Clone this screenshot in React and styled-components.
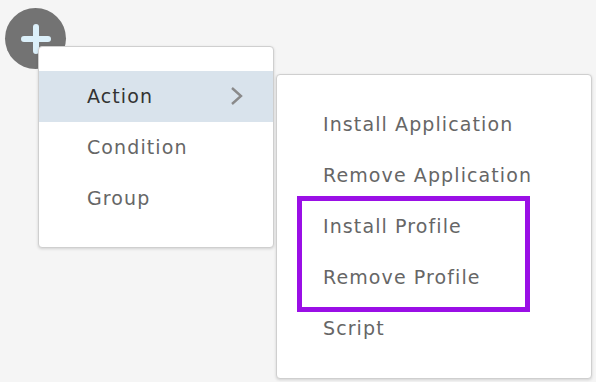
import React from 'react';
import styled, { createGlobalStyle } from 'styled-components';

const GlobalStyle = createGlobalStyle`
    html, body {
        margin: 0;
        background: #f5f5f5;
        font-family: "DejaVu Sans", "Open Sans", sans-serif;
    }
`;

const actions = [
    'Install Application',
    'Remove Application',
    'Install Profile',
    'Remove Profile',
    'Script',
];

const App = () => {
    return (
        <Page>
            <GlobalStyle />
            <AddButton>
                <svg width="32" height="32" viewBox="0 0 32 32">
                    <path d="M16 4v24M4 16h24" stroke="#dcf0fa" strokeWidth="6" strokeLinecap="round" />
                </svg>
                <Dropdown>
                    <Menu $width={236}>
                        <Item $active>
                            Action
                            <svg width="14" height="20" viewBox="0 0 14 20">
                                <path d="M2 2l9 8-9 8" fill="none" stroke="#8a8a8a" strokeWidth="2.4" />
                            </svg>
                        </Item>
                        <Item>Condition</Item>
                        <Item>Group</Item>
                    </Menu>
                    <SubMenu $width={316}>
                        {actions.map((a) => (
                            <Item key={a} $sub>{a}</Item>
                        ))}
                        <Highlight />
                    </SubMenu>
                </Dropdown>
            </AddButton>
        </Page>
    );
};

const Page = styled.div`
    padding: 8px 0 0 5px;
    height: 382px;
    box-sizing: border-box;
`;

const AddButton = styled.div`
    position: relative;
    width: 61px;
    height: 61px;
    border-radius: 50%;
    background: #737373;
    display: flex;
    align-items: center;
    justify-content: center;
`;

const Dropdown = styled.div`
    position: absolute;
    top: 38px;
    left: 33px;
    display: flex;
    align-items: flex-start;
    gap: 2px;
`;

const Menu = styled.div`
    width: ${(p) => p.$width}px;
    box-sizing: border-box;
    background: #fff;
    border: 1px solid #cfcfcf;
    border-radius: 4px;
    box-shadow: 0 1px 3px rgba(0, 0, 0, 0.15);
    padding: 24px 0 23px;
`;

const SubMenu = styled(Menu)`
    position: relative;
    margin-top: 28px;
    padding: 24px 0;
`;

const Item = styled.div`
    height: 51px;
    display: flex;
    align-items: center;
    justify-content: space-between;
    padding: 0 29px 2px ${(p) => (p.$sub ? 46 : 48)}px;
    box-sizing: border-box;
    font-size: 19px;
    letter-spacing: 1.1px;
    color: ${(p) => (p.$active ? '#333' : '#666')};
    background: ${(p) => (p.$active ? '#d9e3ec' : 'transparent')};
`;

const Highlight = styled.div`
    position: absolute;
    left: 20px;
    top: 121px;
    width: 233px;
    height: 116px;
    box-sizing: border-box;
    border: 5px solid #9a0fe6;
`;

export default App;
